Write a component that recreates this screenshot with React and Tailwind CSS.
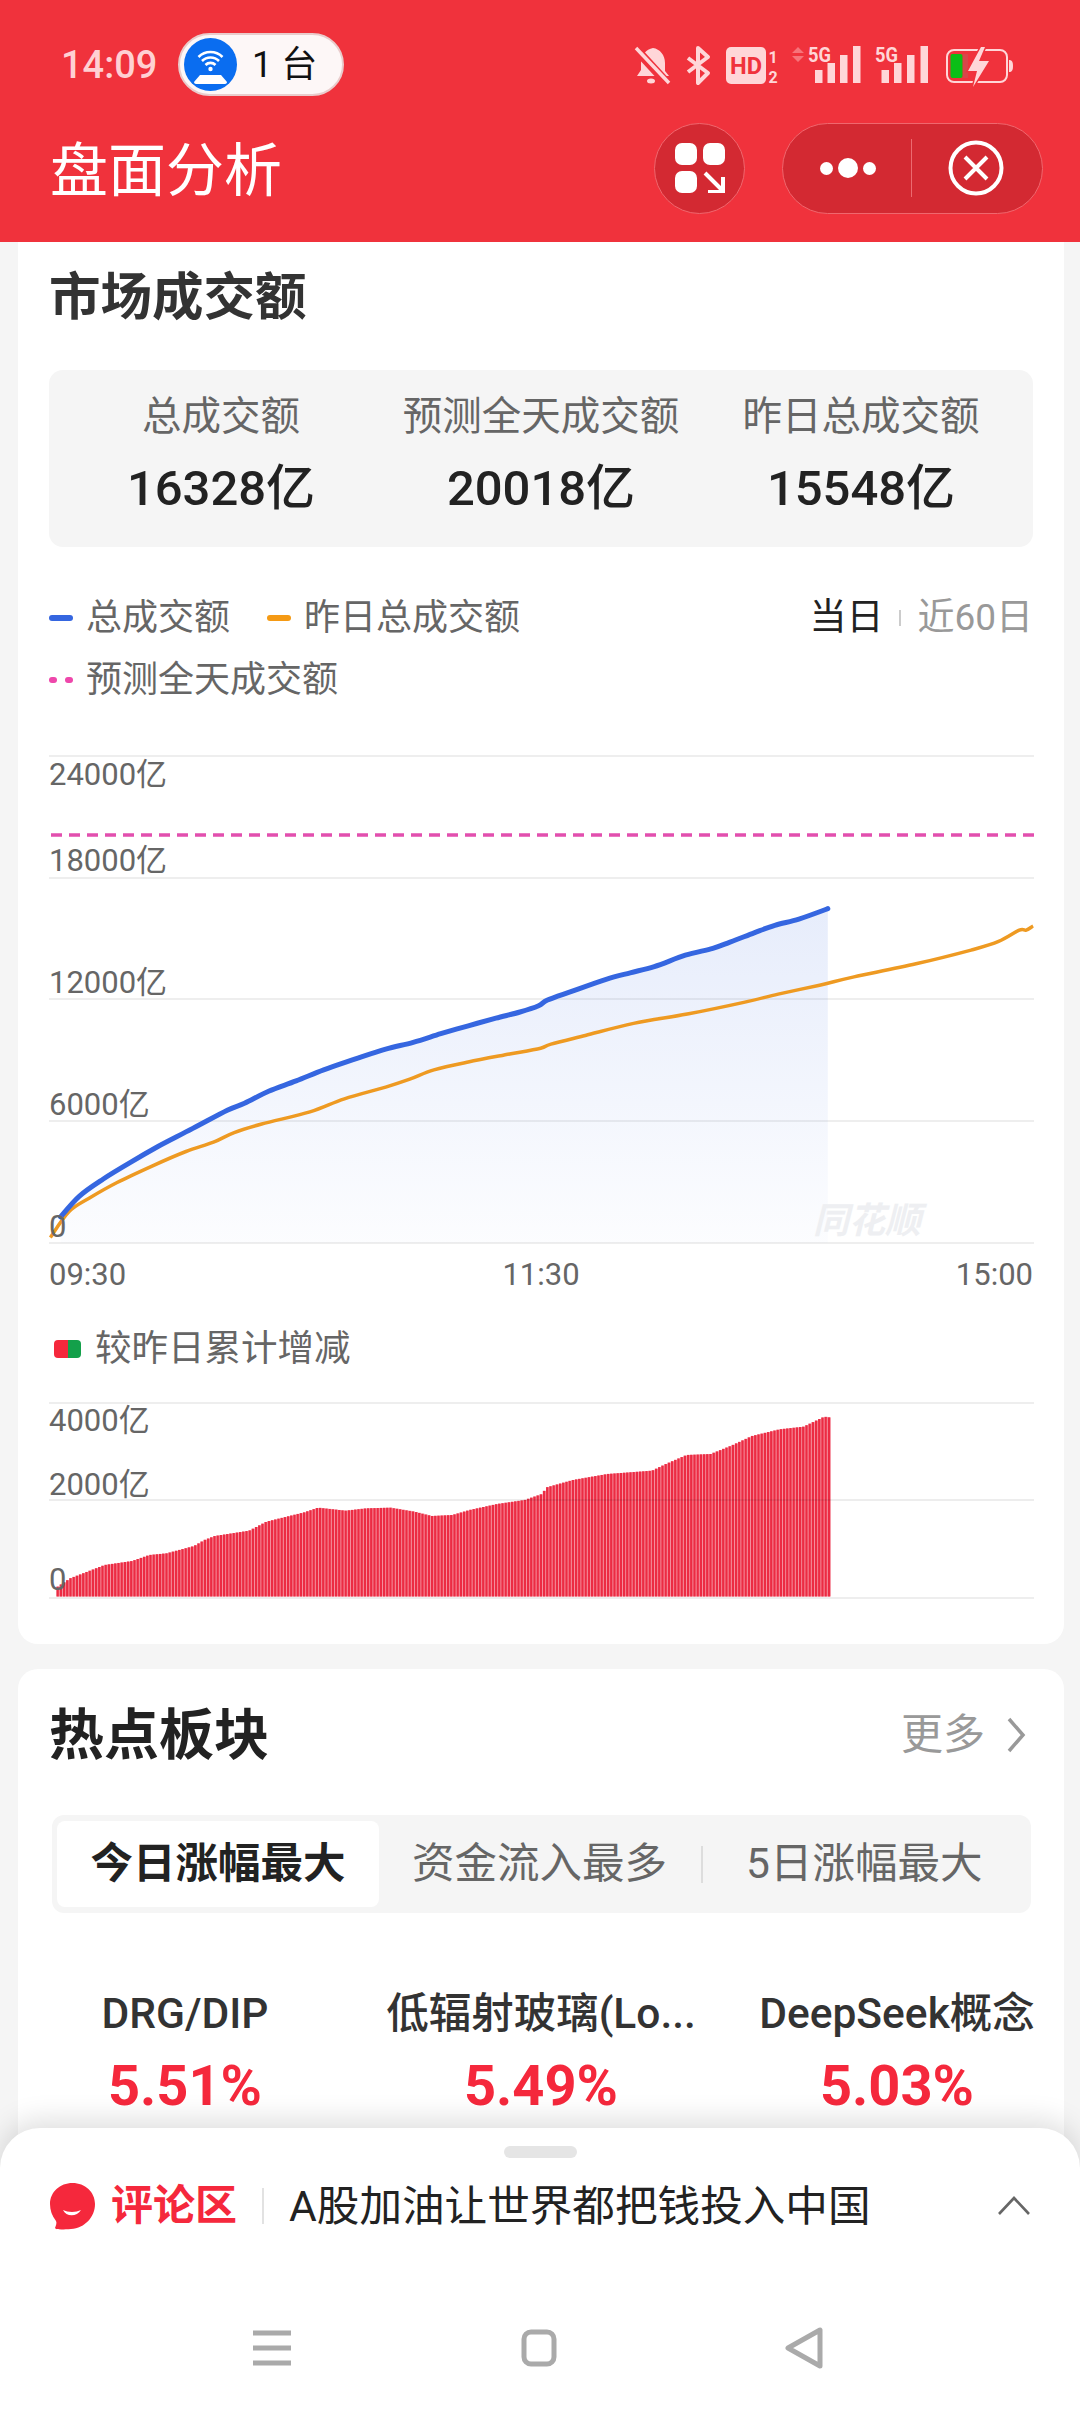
import React from "react";

const zx = (x) => x / 1.452;
const toPath = (pts) => {
  let d = `M${pts[0][0].toFixed(1)} ${pts[0][1].toFixed(1)}`;
  for (let i = 0; i < pts.length - 1; i++) {
    const p0 = pts[Math.max(i - 1, 0)], p1 = pts[i], p2 = pts[i + 1], p3 = pts[Math.min(i + 2, pts.length - 1)];
    const c1 = [p1[0] + (p2[0] - p0[0]) / 6, p1[1] + (p2[1] - p0[1]) / 6];
    const c2 = [p2[0] - (p3[0] - p1[0]) / 6, p2[1] - (p3[1] - p1[1]) / 6];
    d += `C${c1[0].toFixed(1)} ${c1[1].toFixed(1)} ${c2[0].toFixed(1)} ${c2[1].toFixed(1)} ${p2[0].toFixed(1)} ${p2[1].toFixed(1)}`;
  }
  return d;
};
const mapLine = (arr) => arr.map(([x, y]) => [zx(x) - 49, 740 + y / 2.904 - 755]);
const blue = mapLine([[88,1385],[115,1325],[150,1275],[190,1226],[230,1180],[280,1128],[330,1075],[355,1055],[390,1020],[430,990],[470,958],[515,927],[560,898],[600,878],[640,853],[680,830],[720,808],[755,790],[782,772],[795,755],[830,730],[880,695],[915,676],[950,658],[995,625],[1035,605],[1060,587],[1095,560],[1125,538],[1160,520],[1202,490]]);
const orange = mapLine([[73,1445],[100,1370],[130,1330],[170,1285],[220,1238],[270,1195],[310,1168],[340,1140],[380,1115],[450,1080],[500,1042],[560,1008],[595,985],[630,958],[680,935],[740,912],[785,895],[800,883],[850,858],[920,823],[1000,795],[1080,762],[1130,738],[1190,712],[1240,688],[1330,650],[1410,610],[1450,585],[1480,552],[1490,552],[1500,540]]);
const bluePath = toPath(blue);
const orangePath = toPath(orange);
const last = blue[blue.length - 1];
const areaPath = `${bluePath}L${last[0].toFixed(1)} 488L${blue[0][0].toFixed(1)} 488Z`;

const profile = [[82,860],[100,835],[125,815],[150,795],[190,783],[215,765],[240,760],[280,738],[295,720],[310,708],[360,692],[385,665],[440,637],[460,623],[500,632],[530,625],[565,623],[600,635],[625,648],[655,645],[680,630],[720,612],[760,600],[785,582],[792,562],[830,540],[880,522],[945,512],[965,492],[995,465],[1030,462],[1060,437],[1090,408],[1130,388],[1165,380],[1195,350],[1205,353]];
const topAt = (zxv) => {
  for (let i = 0; i < profile.length - 1; i++) {
    const [a, b] = profile[i], [c, d] = profile[i + 1];
    if (zxv >= a && zxv <= c) return b + ((d - b) * (zxv - a)) / (c - a);
  }
  return profile[profile.length - 1][1];
};
const bars = Array.from({ length: 242 }, (_, i) => {
  const x = 7.5 + i * 3.2;
  const y = 1300 + topAt((x + 49) * 1.452) / 3 - 1402;
  return { x, y, h: 194.5 - y };
});

function StatusIcons() {
  const pink = "#ffd6d8";
  const red = "#f0323c";
  const t = { fontFamily: "Roboto, sans-serif", fontWeight: 700 };
  return (
    <svg width="379" height="63" viewBox="634 33 379 63">
      <path d="M653 48c7 1 12 7 12 15v8l4 5H637l4-6v-8c0-6 5-13 12-14z" fill={pink} />
      <ellipse cx="651" cy="81" rx="4" ry="2.5" fill={pink} />
      <path d="M633 46l34 37" stroke={red} strokeWidth="9" />
      <path d="M636 48l33 35" stroke={pink} strokeWidth="3.5" />
      <path d="M688 58l20 15-10 10V48l10 9-20 15" stroke={pink} strokeWidth="4" fill="none" strokeLinejoin="round" />
      <rect x="726" y="47" width="40" height="37" rx="5" fill={pink} />
      <text x="746" y="74" textAnchor="middle" fontSize="24" textLength="32" lengthAdjust="spacingAndGlyphs" fill={red} style={t}>HD</text>
      <text x="773" y="63" textAnchor="middle" fontSize="16" fill={pink} style={t}>1</text>
      <text x="773" y="83" textAnchor="middle" fontSize="16" fill={pink} style={t}>2</text>
      <path d="M798 47l6 6h-12zM798 62l6-6h-12z" fill="#f7737a" />
      <text x="808" y="62" fontSize="21" textLength="23" lengthAdjust="spacingAndGlyphs" fill={pink} style={t}>5G</text>
      <rect x="815" y="70" width="7.5" height="13" fill={pink} />
      <rect x="827.5" y="63" width="7.5" height="20" fill={pink} />
      <rect x="840" y="55" width="7.5" height="28" fill={pink} />
      <rect x="853" y="46" width="7.5" height="37" fill={pink} />
      <text x="875" y="62" fontSize="21" textLength="23" lengthAdjust="spacingAndGlyphs" fill={pink} style={t}>5G</text>
      <rect x="881.5" y="70" width="7.5" height="13" fill={pink} />
      <rect x="894" y="63" width="7.5" height="20" fill={pink} />
      <rect x="907" y="55" width="7.5" height="28" fill={pink} />
      <rect x="920.5" y="46" width="7.5" height="37" fill={pink} />
      <rect x="947" y="50" width="60" height="32" rx="7" fill="none" stroke={pink} strokeWidth="2" />
      <rect x="950.5" y="54" width="12" height="24" rx="2" fill="#0bbf17" />
      <rect x="963" y="54" width="5" height="24" fill="#d9464a" />
      <path d="M1009 60c3 0 4 2 4 6s-1 6-4 6z" fill={pink} />
      <path d="M981 47l-13 24h9l-4 16 16-26h-10l6-14z" fill={pink} stroke={red} strokeWidth="3" paintOrder="stroke" />
    </svg>
  );
}

function Legend({ color, label, ml = "", dotted }) {
  return (
    <div className={`flex items-center ${ml}`}>
      {dotted ? (
        <div className="flex w-[24px] justify-between">
          <span className="h-[6px] w-[8px] rounded-full bg-[#ee47ab]" />
          <span className="h-[6px] w-[8px] rounded-full bg-[#ee47ab]" />
        </div>
      ) : (
        <span className={`h-[6px] w-[24px] rounded-full ${color}`} />
      )}
      <span className="ml-[13px] text-[36px] leading-[62px] text-[#666]">{label}</span>
    </div>
  );
}

function Stat({ label, value }) {
  return (
    <div className="flex flex-col items-center">
      <div className="whitespace-nowrap text-[39.500px] leading-[50px] text-[#666]">{label}</div>
      <div className="mt-[17px] whitespace-nowrap text-[49px] font-medium leading-[60px] text-[#222]">{value}</div>
    </div>
  );
}

const axisCls = "absolute left-0 whitespace-nowrap text-[31px] leading-[34px] text-[#666]";

function MainChart() {
  return (
    <div className="relative mt-[44px] h-[490px]">
      <svg width="985" height="490" className="absolute left-0 top-0 block" style={{ overflow: "visible" }}>
        <defs>
          <linearGradient id="areaFill" x1="0" y1="90" x2="0" y2="488" gradientUnits="userSpaceOnUse">
            <stop offset="0" stopColor="#3566e0" stopOpacity="0.14" />
            <stop offset="1" stopColor="#3566e0" stopOpacity="0.015" />
          </linearGradient>
        </defs>
        {[1, 123, 244, 366, 488].map((y) => (
          <line key={y} x1="0" x2="985" y1={y} y2={y} stroke="#000" strokeOpacity="0.065" strokeWidth="2" />
        ))}
        <path d={areaPath} fill="url(#areaFill)" />
        <line x1="2" x2="985" y1="80" y2="80" stroke="#e24fae" strokeWidth="3.5" strokeDasharray="11 7" />
        <path d={orangePath} fill="none" stroke="#ee9a22" strokeWidth="3.5" strokeLinejoin="round" />
        <path d={bluePath} fill="none" stroke="#3566e0" strokeWidth="5" strokeLinejoin="round" strokeLinecap="round" />
      </svg>
      <span className={`${axisCls} top-[3px]`}>24000亿</span>
      <span className={`${axisCls} top-[89px]`}>18000亿</span>
      <span className={`${axisCls} top-[211px]`}>12000亿</span>
      <span className={`${axisCls} top-[333px]`}>6000亿</span>
      <span className={`${axisCls} top-[455px]`}>0</span>
      <span className="absolute left-[764px] top-[446px] whitespace-nowrap text-[36px] font-bold italic leading-[40px] text-[#eeeff2]">同花顺</span>
    </div>
  );
}

function BarChart() {
  return (
    <div className="relative mt-[28px] h-[197px]">
      <svg width="985" height="197" className="absolute left-0 top-0 block">
        <line x1="0" x2="985" y1="1" y2="1" stroke="#000" strokeOpacity="0.065" strokeWidth="2" />
        <line x1="0" x2="985" y1="196" y2="196" stroke="#000" strokeOpacity="0.065" strokeWidth="2" />
        {bars.map((b, i) => (
          <rect key={i} x={b.x} y={b.y} width="3.2" height={b.h} fill="#f6909e" />
        ))}
        {bars.map((b, i) => (
          <rect key={i} x={b.x} y={b.y} width="2.3" height={b.h} fill="#ec2b43" />
        ))}
        <line x1="0" x2="985" y1="98" y2="98" stroke="#000" strokeOpacity="0.07" strokeWidth="2" />
      </svg>
      <span className={`${axisCls} top-[2px]`}>4000亿</span>
      <span className={`${axisCls} top-[66px]`}>2000亿</span>
      <span className={`${axisCls} top-[161px]`}>0</span>
    </div>
  );
}

function Hot({ name, pct }) {
  return (
    <div className="flex flex-col items-center">
      <div className="whitespace-nowrap text-[42.500px] font-medium leading-[50px] text-[#333]">{name}</div>
      <div className="mt-[17px] text-[56px] font-bold leading-[60px] text-[#f5283c]">{pct}</div>
    </div>
  );
}

export default function App() {
  return (
    <div className="relative flex h-[2414px] w-[1080px] flex-col overflow-hidden bg-[#f5f5f5] font-[Roboto,'Noto_Sans_CJK_SC',sans-serif]">
      <header className="shrink-0 bg-[#f0323c] pb-[29px] pt-[33px]">
        <div className="flex h-[63px] items-center pl-[61px] pr-[67px]">
          <span className="w-[117px] text-[38px] font-medium leading-none text-[#ffd0d3]">14:09</span>
          <div className="flex h-[63px] w-[166px] items-center rounded-full border-2 border-[#e9cccc] bg-[#fdf7f7] pl-[4px]">
            <svg width="53" height="53" viewBox="0 0 53 53">
              <circle cx="26.5" cy="26.5" r="26.5" fill="#0a6df0" />
              <path d="M14.5 19a17 17 0 0 1 24 0M18 23a12 12 0 0 1 17 0M21.5 27a7 7 0 0 1 10 0" fill="none" stroke="#fff" strokeWidth="2.6" />
              <circle cx="26.5" cy="31" r="2.2" fill="#fff" />
              <path d="M16 37h21l6 7c0 1-1 2-2 2H12c-1 0-2-1-2-2z" fill="#fff" />
            </svg>
            <span className="ml-[15px] whitespace-nowrap text-[36px] leading-none text-[#111]">1 台</span>
          </div>
          <div className="ml-auto flex">
            <StatusIcons />
          </div>
        </div>
        <div className="mt-[27px] flex h-[90px] items-center pl-[50px] pr-[37px]">
          <h1 className="mt-[5px] text-[58px] font-normal leading-none text-white">盘面分析</h1>
          <button className="ml-auto flex h-[91px] w-[91px] items-center justify-center rounded-full border border-[#f0676e] bg-[#d32932]">
            <svg width="50" height="50" viewBox="0 0 50 50">
              <rect x="0" y="0" width="22" height="22" rx="7" fill="#fff" />
              <rect x="28" y="0" width="22" height="22" rx="7" fill="#fff" />
              <rect x="0" y="28" width="22" height="22" rx="7" fill="#fff" />
              <path d="M30 30l18 18M48 34v15H33" fill="none" stroke="#fff" strokeWidth="4" />
            </svg>
          </button>
          <div className="ml-[37px] flex h-[91px] w-[261px] items-center rounded-full border border-[#f0676e] bg-[#d32932]">
            <div className="flex w-[128px] items-center justify-center gap-[5px] pl-[2px]">
              <span className="h-[13px] w-[13px] rounded-full bg-white" />
              <span className="h-[20px] w-[20px] rounded-full bg-white" />
              <span className="h-[13px] w-[13px] rounded-full bg-white" />
            </div>
            <span className="h-[58px] w-px bg-[#ec6a70]" />
            <div className="flex flex-1 items-center justify-center pr-[2px]">
              <svg width="56" height="56" viewBox="0 0 56 56">
                <circle cx="28" cy="28" r="25.5" fill="none" stroke="#fff" strokeWidth="4" />
                <path d="M17 17l22 22M39 17L17 39" stroke="#fff" strokeWidth="4" />
              </svg>
            </div>
          </div>
        </div>
      </header>

      <main className="min-h-0 flex-1 overflow-hidden pl-[18px] pr-[16px]">
        <section className="rounded-b-[20px] bg-white px-[31px] pb-[45px] pt-[26px]">
          <h2 className="text-[51.500px] font-bold leading-[60px] text-[#333]">市场成交额</h2>
          <div className="mt-[42px] grid h-[177px] grid-cols-3 rounded-[14px] bg-[#f5f5f5] px-[12px] pt-[22px]">
            <Stat label="总成交额" value="16328亿" />
            <Stat label="预测全天成交额" value="20018亿" />
            <Stat label="昨日总成交额" value="15548亿" />
          </div>
          <div className="mt-[40px] flex items-start">
            <div>
              <div className="flex">
                <Legend color="bg-[#3566e0]" label="总成交额" />
                <Legend color="bg-[#f59a14]" label="昨日总成交额" ml="ml-[37px]" />
              </div>
              <Legend dotted label="预测全天成交额" />
            </div>
            <div className="ml-auto flex items-center text-[37px] leading-[62px]">
              <span className="text-[#222]">当日</span>
              <span className="mx-[16px] h-[16px] w-[2px] bg-[#ccc]" />
              <span className="text-[#999]">近60日</span>
            </div>
          </div>
          <MainChart />
          <div className="mt-[10px] flex justify-between text-[31px] leading-[40px] text-[#666]">
            <span>09:30</span>
            <span>11:30</span>
            <span>15:00</span>
          </div>
          <div className="mt-[29px] flex h-[50px] items-center">
            <span className="ml-[5px] flex h-[18px] w-[27px] overflow-hidden rounded-[4px]">
              <span className="flex-1 bg-[#f5283c]" />
              <span className="flex-1 bg-[#13a04a]" />
            </span>
            <span className="ml-[14px] text-[36.500px] leading-none text-[#666]">较昨日累计增减</span>
          </div>
          <BarChart />
        </section>

        <section className="mt-[25px] rounded-[20px] bg-white pb-[40px] pt-[36px]">
          <div className="flex h-[60px] items-center pl-[31px] pr-[38px]">
            <h2 className="text-[55px] font-bold leading-none text-[#222]">热点板块</h2>
            <span className="ml-auto text-[42px] leading-none text-[#999]">更多</span>
            <svg width="20" height="36" viewBox="0 0 20 36" className="ml-[21px]">
              <path d="M3 2l14 16L3 34" fill="none" stroke="#999" strokeWidth="3.5" />
            </svg>
          </div>
          <div className="ml-[34px] mt-[50px] flex h-[98px] w-[979px] items-center rounded-[12px] bg-[#f5f5f5] pl-[5px]">
            <div className="flex h-[86px] w-[322px] items-center justify-center rounded-[8px] bg-white text-[42.500px] font-bold leading-none text-[#222]">今日涨幅最大</div>
            <span className="ml-[33px] whitespace-nowrap text-[42.500px] leading-none text-[#666]">资金流入最多</span>
            <span className="ml-[34px] h-[37px] w-[2px] bg-[#ddd]" />
            <span className="ml-[43px] whitespace-nowrap text-[42.500px] leading-none text-[#666]">5日涨幅最大</span>
          </div>
          <div className="ml-[4px] mt-[76px] grid w-[1038px] grid-cols-3 gap-x-[30px]">
            <Hot name="DRG/DIP" pct="5.51%" />
            <Hot name="低辐射玻璃(Lo..." pct="5.49%" />
            <Hot name="DeepSeek概念" pct="5.03%" />
          </div>
        </section>
      </main>

      <div className="absolute bottom-0 left-0 flex h-[286px] w-full flex-col rounded-t-[40px] bg-white pt-[18px] shadow-[0_-8px_28px_rgba(0,0,0,0.13)]">
        <span className="mx-auto h-[12px] w-[73px] rounded-full bg-[#e5e5e5]" />
        <div className="mt-[23px] flex h-[50px] items-center pl-[50px] pr-[49px]">
          <svg width="45" height="47" viewBox="0 0 45 47">
            <path d="M22.5 0C35 0 45 9 45 21c0 13-10 24-24 25-8 .5-15 1-16-1 1-3 2-5 1-7C2 33 0 27 0 21 0 9 10 0 22.5 0z" fill="#f5283c" />
            <path d="M13 27c3 7 14 7 18 0-5 2.500-13 2.500-18 0z" fill="#fff" />
          </svg>
          <span className="ml-[16px] text-[42px] font-bold leading-none text-[#f5283c]">评论区</span>
          <span className="ml-[25px] h-[36px] w-[2px] bg-[#e2e2e2]" />
          <span className="ml-[25px] whitespace-nowrap text-[42.600px] leading-none text-[#222]">A股加油让世界都把钱投入中国</span>
          <svg width="34" height="20" viewBox="0 0 34 20" className="ml-auto">
            <path d="M2 18L17 2l15 16" fill="none" stroke="#666" strokeWidth="2.600" />
          </svg>
        </div>
        <div className="ml-[253px] mt-[97px] flex h-[40px] items-center">
          <svg width="38" height="36" viewBox="0 0 38 36">
            <path d="M0 3h38M0 18h38M0 33h38" stroke="#aaa" strokeWidth="5" />
          </svg>
          <svg width="36" height="38" viewBox="0 0 36 38" className="ml-[230px]">
            <rect x="3" y="3" width="30" height="32" rx="7" fill="none" stroke="#aaa" strokeWidth="5" />
          </svg>
          <svg width="38" height="42" viewBox="0 0 38 42" className="ml-[228px]">
            <path d="M35 3v36L3 21z" fill="none" stroke="#aaa" strokeWidth="5" strokeLinejoin="round" />
          </svg>
        </div>
      </div>
    </div>
  );
}
